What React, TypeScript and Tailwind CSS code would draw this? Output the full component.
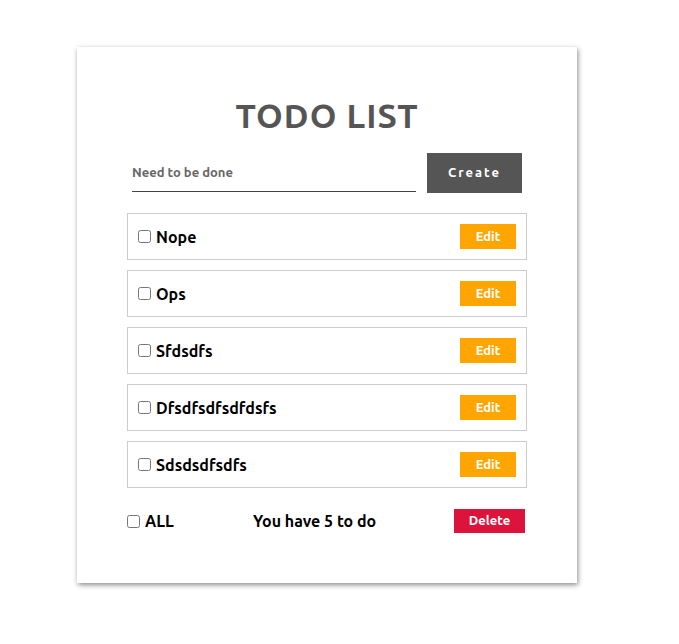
import { useState } from 'react';

const initialTodos = ['Nope', 'Ops', 'Sfdsdfs', 'Dfsdfsdfsdfdsfs', 'Sdsdsdfsdfs'];

export default function App() {
  const [todos] = useState<string[]>(initialTodos);
  const [text, setText] = useState('');

  return (
    <div className="min-h-screen bg-white pt-[47px] pl-[77px] font-['Ubuntu','Open_Sans',sans-serif]">
      <div className="w-[500px] h-[536px] bg-white shadow-[1px_2px_5px_rgba(0,0,0,0.45)] px-[50px] pt-[50px]">
        {/* 标题 */}
        <h1 className="text-center text-[34px] font-bold tracking-[1px] text-[#555] leading-[40px] -mt-[2px]">
          TODO LIST
        </h1>

        {/* 输入栏 */}
        <div className="flex items-stretch mt-[18px] px-[5px]">
          <input
            value={text}
            onChange={(e) => setText(e.target.value)}
            placeholder="Need to be done"
            className="w-[284px] h-[39px] border-b border-[#444] text-[13px] font-semibold text-[#555] placeholder:text-[#666] outline-none"
          />
          <button className="ml-[11px] w-[95px] h-[40px] bg-[#555] text-white text-[13px] font-semibold tracking-[2px]">
            Create
          </button>
        </div>

        {/* 列表 */}
        <ul className="mt-[20px] flex flex-col gap-[10px]">
          {todos.map((t) => (
            <li
              key={t}
              className="h-[47px] border border-[#ccc] flex items-center justify-between pl-[10px] pr-[10px]"
            >
              <label className="flex items-center gap-[5px] text-[16px] font-semibold text-black">
                <input type="checkbox" className="w-[13px] h-[13px]" />
                {t}
              </label>
              <button className="w-[56px] h-[25px] bg-[#ffa500] text-white text-[13px] font-semibold">
                Edit
              </button>
            </li>
          ))}
        </ul>

        {/* 底部 */}
        <div className="mt-[21px] flex items-center h-[24px]">
          <label className="flex items-center gap-[5px] text-[16px] font-semibold text-black w-[126px]">
            <input type="checkbox" className="w-[13px] h-[13px]" />
            ALL
          </label>
          <span className="text-[16px] font-semibold text-black">You have {todos.length} to do</span>
          <button className="ml-auto mr-[2px] w-[71px] h-[24px] bg-[#dc143c] text-white text-[13px] font-semibold">
            Delete
          </button>
        </div>
      </div>
    </div>
  );
}
